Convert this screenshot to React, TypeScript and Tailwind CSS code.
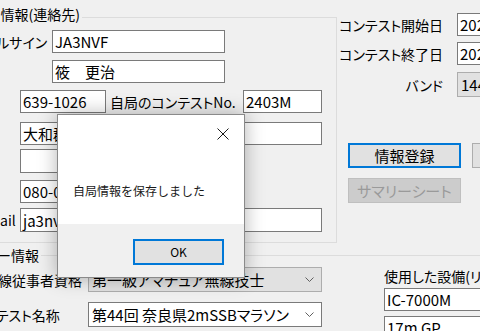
import React from "react";

function TextBox({ className = "", children }: { className?: string; children?: React.ReactNode }) {
  return (
    <div className={`flex shrink-0 items-center overflow-hidden whitespace-nowrap border border-[#7a7a7a] bg-white pl-[2px] text-[15px] ${className}`}>
      {children}
    </div>
  );
}

function Chevron() {
  return (
    <svg width="9" height="5" viewBox="0 0 9 5" fill="none" stroke="#606060" strokeWidth="1">
      <path d="M0.5 0.5 4.5 4.5 8.5 0.5" />
    </svg>
  );
}

export default function App() {
  return (
    <div className="relative h-[331px] w-[480px] overflow-hidden bg-[#f0f0f0] font-['Noto_Sans_CJK_JP',sans-serif] text-[14px] leading-none text-black [font-feature-settings:'palt']">
      <div className="flex h-[249px]">
        {/* 自局情報(連絡先) */}
        <div className="relative ml-[-30px] mt-[17px] h-[226px] w-[367px] shrink-0 border border-[#dcdcdc] pl-[6px] pt-[12px]">
          <div className="absolute left-[-100px] top-[-11px] w-[211px] text-right">
            <span className="bg-[#f0f0f0] pr-[2px]">自局情報(連絡先)</span>
          </div>

          <div className="flex h-[23px] items-center">
            <span className="-ml-[8px] w-[83px] shrink-0 whitespace-nowrap">コールサイン</span>
            <TextBox className="h-[23px] w-[173px]">JA3NVF</TextBox>
          </div>
          <div className="mt-[7px] flex h-[23px] items-center">
            <span className="-ml-[7px] w-[82px] shrink-0 whitespace-nowrap">氏名</span>
            <TextBox className="h-[23px] w-[173px]">筱　更治</TextBox>
          </div>
          <div className="mt-[7px] flex h-[23px] items-center">
            <span className="w-[43px] shrink-0"></span>
            <TextBox className="h-[23px] w-[86px]">639-1026</TextBox>
            <span className="ml-[4px] w-[133px] shrink-0 whitespace-nowrap">自局のコンテストNo.</span>
            <TextBox className="h-[23px] w-[79px]">2403M</TextBox>
          </div>
          <div className="mt-[9px] flex h-[23px] items-center">
            <span className="-ml-[7px] w-[50px] shrink-0 whitespace-nowrap">住所</span>
            <TextBox className="h-[23px] w-[302px]">大和郡山市</TextBox>
          </div>
          <div className="mt-[4px] flex h-[24px] items-center">
            <span className="w-[43px] shrink-0"></span>
            <TextBox className="h-[24px] w-[205px]" />
          </div>
          <div className="mt-[7px] flex h-[23px] items-center">
            <span className="-ml-[7px] w-[50px] shrink-0 whitespace-nowrap">電話</span>
            <TextBox className="h-[23px] w-[205px]">080-0000-0000</TextBox>
          </div>
          <div className="mt-[5px] flex h-[24px] items-center">
            <span className="-ml-[3px] w-[46px] shrink-0 whitespace-nowrap">E-mail</span>
            <TextBox className="h-[24px] w-[302px]">ja3nvf@example.jp</TextBox>
          </div>
        </div>

        {/* contest settings */}
        <div className="flex flex-col pt-[13px]">
          <div className="flex h-[23px] items-center">
            <span className="w-[106px] shrink-0 whitespace-nowrap text-right">コンテスト開始日</span>
            <TextBox className="ml-[14px] h-[23px] w-[120px]">2024/03/17</TextBox>
          </div>
          <div className="mt-[6px] flex h-[23px] items-center">
            <span className="w-[106px] shrink-0 whitespace-nowrap text-right">コンテスト終了日</span>
            <TextBox className="ml-[14px] h-[23px] w-[120px]">2024/03/17</TextBox>
          </div>
          <div className="mt-[7px] flex h-[25px] items-center">
            <span className="w-[106px] shrink-0 whitespace-nowrap text-right">バンド</span>
            <div className="ml-[14px] flex h-[25px] w-[120px] shrink-0 items-center border border-[#adadad] bg-[#e1e1e1] pl-[3px] text-[15px]">
              144MHz
            </div>
          </div>
          <div className="ml-[11px] mt-[46px] flex gap-[11px]">
            <button className="h-[25px] w-[113px] shrink-0 border-2 border-[#0078d7] bg-[#e1e1e1] text-[15px]">情報登録</button>
            <button className="h-[25px] w-[113px] shrink-0 border border-[#adadad] bg-[#e1e1e1] text-[15px]">終了</button>
          </div>
          <button className="ml-[11px] mt-[10px] h-[25px] w-[113px] border border-[#bfbfbf] bg-[#cccccc] text-[15px] text-[#9a9a9a]">
            サマリーシート
          </button>
        </div>
      </div>

      {/* オペレーター情報 */}
      <div className="relative ml-[-30px] mt-[6px] flex h-[120px] w-[560px] border-t border-[#dcdcdc]">
        <div className="absolute left-[-130px] top-[-8px] w-[201px] text-right">
          <span className="whitespace-nowrap bg-[#f0f0f0] pr-[2px]">オペレーター情報</span>
        </div>

        <div className="flex w-[352px] shrink-0 flex-col">
          <div className="mt-[11px] flex h-[25px] items-center">
            <span className="w-[112px] shrink-0 whitespace-nowrap text-right">無線従事者資格</span>
            <div className="ml-[6px] flex h-[25px] w-[234px] shrink-0 items-center justify-between border border-[#adadad] bg-[#e1e1e1] pl-[3px] pr-[7px] text-[15px]">
              <span className="whitespace-nowrap">第一級アマチュア無線技士</span>
              <Chevron />
            </div>
          </div>
          <div className="mt-[10px] flex h-[25px] items-center">
            <span className="w-[112px] shrink-0 whitespace-nowrap pr-[25px] text-right">コンテスト名称</span>
            <div className="ml-[6px] flex h-[25px] w-[234px] shrink-0 items-center justify-between border border-[#7a7a7a] bg-white pl-[3px] pr-[7px] text-[15px]">
              <span className="whitespace-nowrap">第44回 奈良県2mSSBマラソン</span>
              <Chevron />
            </div>
          </div>
        </div>

        <div className="ml-[62px] flex flex-col">
          <span className="mt-[13px] whitespace-nowrap">使用した設備(リグ)</span>
          <TextBox className="mt-[5px] h-[23px] w-[120px]">IC-7000M</TextBox>
          <TextBox className="mt-[5px] h-[23px] w-[120px]">17m GP</TextBox>
        </div>
      </div>

      {/* message box */}
      <div className="absolute left-[57px] top-[114px] flex h-[164px] w-[188px] flex-col border border-[#8a8a8a] bg-white text-[12px] shadow-[0_0_18px_rgba(0,0,0,0.3)] [font-feature-settings:normal]">
        <div className="flex flex-1 flex-col">
          <div className="flex justify-end pr-[15px] pt-[13px]">
            <svg width="12" height="12" viewBox="0 0 12 12" stroke="#1a1a1a" strokeWidth="1">
              <path d="M0.5 0.5 11.5 11.5 M11.5 0.5 0.5 11.5" />
            </svg>
          </div>
          <p className="mt-[45px] pl-[15px] text-[#1a1a1a]">自局情報を保存しました</p>
        </div>
        <div className="flex h-[53px] bg-[#f0f0f0] pl-[75px] pt-[15px]">
          <button className="h-[26px] w-[91px] border-2 border-[#0078d7] bg-[#e1e1e1] text-[12px]">OK</button>
        </div>
      </div>
    </div>
  );
}
